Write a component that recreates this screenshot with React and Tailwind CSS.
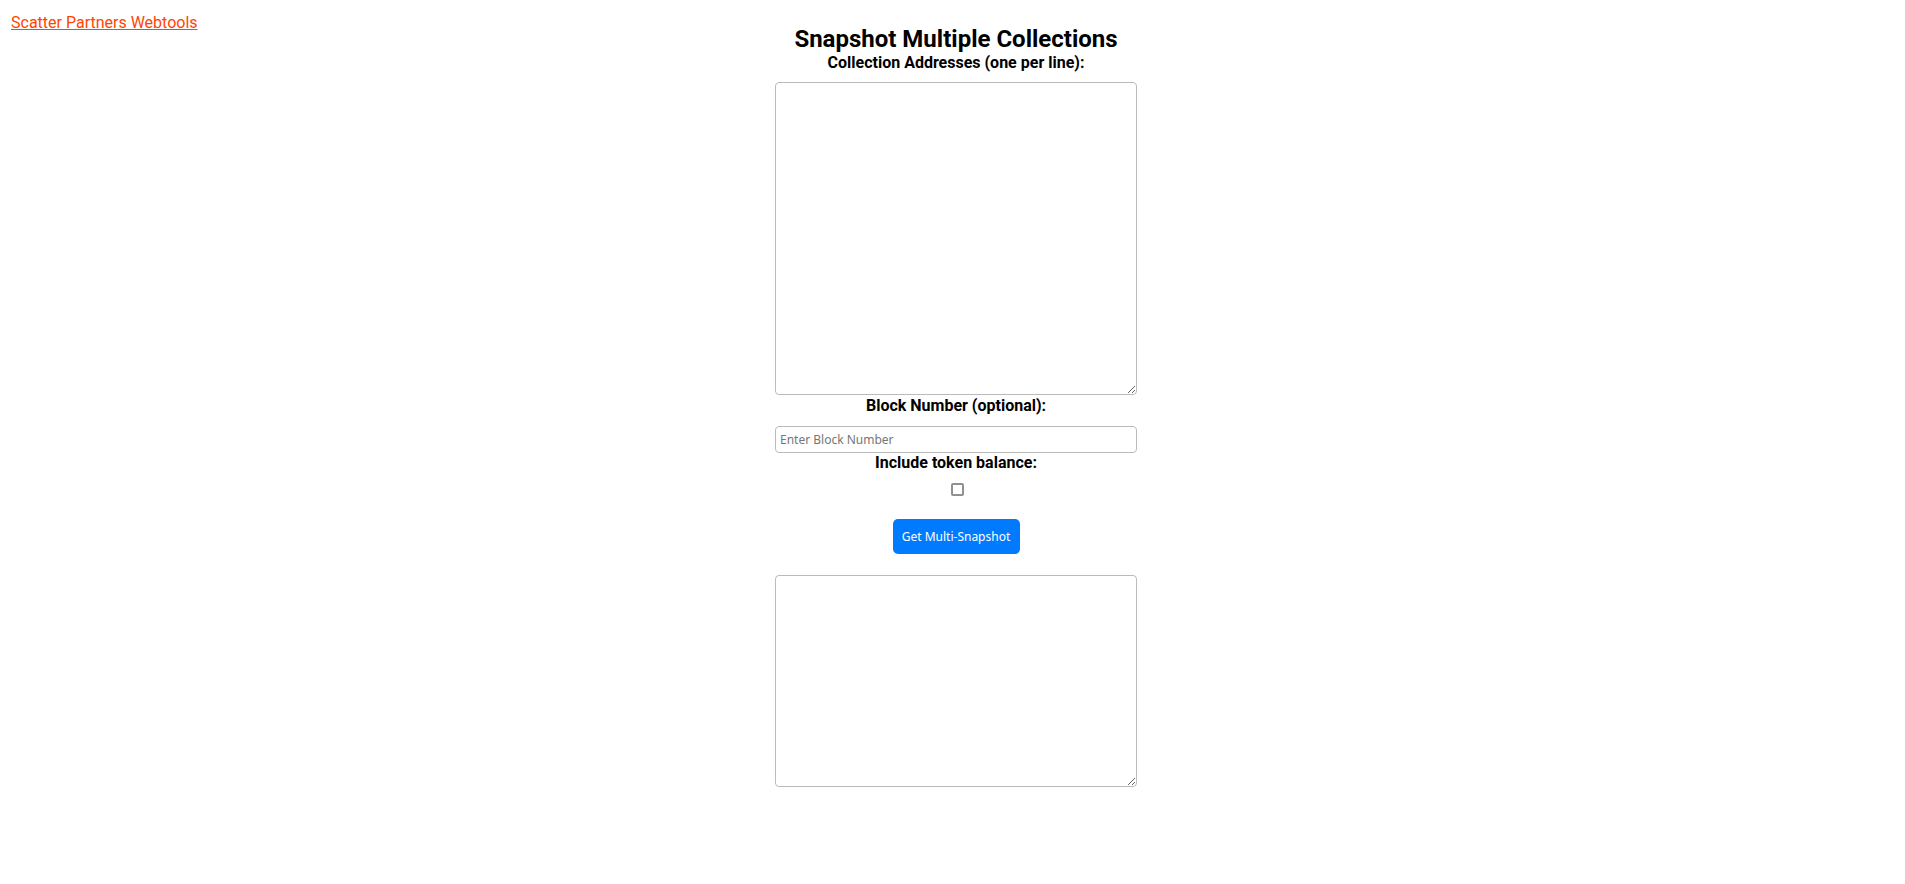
export default function App() {
  return (
    <div className="min-h-screen bg-white grid grid-cols-[775px_362px_1fr] font-['Roboto',sans-serif] text-black">
      {/* Site link */}
      <div className="pl-[11px] pt-[11px]">
        <a href="#" className="text-[16px] leading-[19px] text-[#ff4500] underline">
          Scatter Partners Webtools
        </a>
      </div>

      {/* Main form */}
      <div className="flex flex-col items-center">
        <h1 className="mt-[26px] text-[24px] leading-[27px] font-bold">Snapshot Multiple Collections</h1>
        <label className="text-[16px] leading-[19px] font-bold">Collection Addresses (one per line):</label>
        <textarea className="mt-[10px] w-full h-[313px] border border-[#bbb] rounded-[4px] p-[4px] font-['Noto_Sans',sans-serif] text-[12px]" />

        <label className="mt-[1px] text-[16px] leading-[19px] font-bold">Block Number (optional):</label>
        <input
          type="text"
          placeholder="Enter Block Number"
          className="mt-[11px] w-full h-[27px] border border-[#bbb] rounded-[4px] px-[4px] font-['Noto_Sans',sans-serif] text-[12px] placeholder:text-[#767676]"
        />

        <label className="text-[16px] leading-[19px] font-bold">Include token balance:</label>
        <input
          type="checkbox"
          className="mt-[11px] block w-[13px] h-[13px] ml-[3px] appearance-none border-2 border-[#8f8f94] rounded-[2px] bg-white checked:bg-[#007bff] checked:border-[#007bff]"
        />

        <button className="mt-[23px] w-[127px] h-[35px] rounded-[5px] bg-[#007bff] text-white font-['Noto_Sans',sans-serif] text-[12px]">
          Get Multi-Snapshot
        </button>

        <textarea className="mt-[21px] w-full h-[212px] border border-[#bbb] rounded-[4px] p-[4px] font-['Noto_Sans',sans-serif] text-[12px]" />
      </div>

      <div />
    </div>
  );
}
